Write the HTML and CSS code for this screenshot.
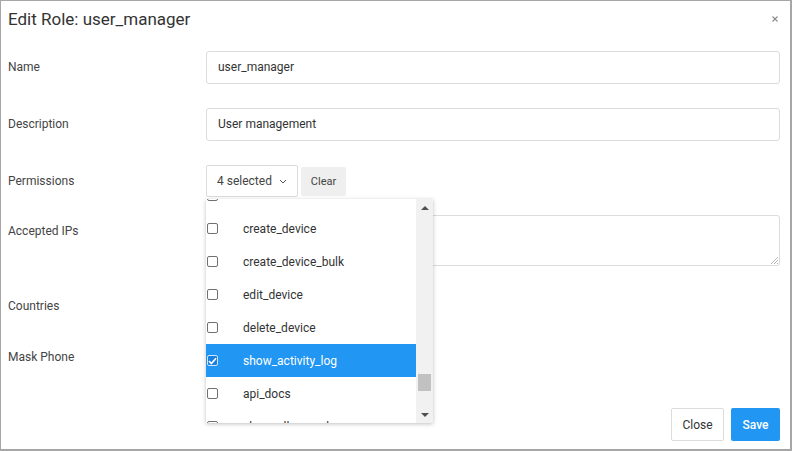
FILE: index.html
```html
<!DOCTYPE html>
<html>
<head>
<meta charset="utf-8">
<link rel="stylesheet" href="styles.css">
</head>
<body>
<div class="dialog">
  <div class="header">
    <h1 class="title">Edit Role: user_manager</h1>
    <button class="x" aria-label="close"><svg width="6" height="6" viewBox="0 0 6 6"><path d="M0.5 0.5L5.5 5.5M5.5 0.5L0.5 5.5" stroke="#8a8a8a" stroke-width="1.1"/></svg></button>
  </div>
  <div class="form">
    <div class="row">
      <label class="lbl">Name</label>
      <div class="field"><div class="input">user_manager</div></div>
    </div>
    <div class="row">
      <label class="lbl">Description</label>
      <div class="field"><div class="input">User management</div></div>
    </div>
    <div class="row row-perm">
      <label class="lbl">Permissions</label>
      <div class="field perm">
        <div class="perm-controls">
          <button class="sel-btn">4 selected <svg width="8" height="5" viewBox="0 0 8 5"><path d="M1 1L4 4L7 1" fill="none" stroke="#555" stroke-width="1"/></svg></button>
          <button class="clear-btn">Clear</button>
        </div>
        <div class="dropdown">
          <div class="list">
            <div class="item partial"><span class="cb"></span></div>
            <div class="item"><span class="cb"></span><span class="txt">create_device</span></div>
            <div class="item"><span class="cb"></span><span class="txt">create_device_bulk</span></div>
            <div class="item"><span class="cb"></span><span class="txt">edit_device</span></div>
            <div class="item"><span class="cb"></span><span class="txt">delete_device</span></div>
            <div class="item active"><span class="cb checked"><svg width="9" height="8" viewBox="0 0 9 8"><path d="M1 4.2L3.4 6.5L8 1.2" fill="none" stroke="#fff" stroke-width="1.6"/></svg></span><span class="txt">show_activity_log</span></div>
            <div class="item"><span class="cb"></span><span class="txt">api_docs</span></div>
            <div class="item"><span class="cb"></span><span class="txt">show_all_records</span></div>
          </div>
          <div class="sbar">
            <div class="arrow up"></div>
            <div class="track"><div class="thumb"></div></div>
            <div class="arrow down"></div>
          </div>
        </div>
      </div>
    </div>
    <div class="row">
      <label class="lbl">Accepted IPs</label>
      <div class="field"><div class="textarea"><svg class="grip" width="8" height="8" viewBox="0 0 8 8"><path d="M1 8L8 1M4 8L8 4M7 8L8 7" stroke="#777" stroke-width="0.8" stroke-dasharray="1 0.6"/></svg></div></div>
    </div>
    <div class="row row-short">
      <label class="lbl">Countries</label>
      <div class="field"></div>
    </div>
    <div class="row row-short">
      <label class="lbl lbl-low">Mask Phone</label>
      <div class="field"></div>
    </div>
  </div>
  <div class="footer">
    <button class="btn btn-close">Close</button>
    <button class="btn btn-save">Save</button>
  </div>
</div>
</body>
</html>
```
FILE: styles.css
```css
* { box-sizing: border-box; }
html, body { margin: 0; padding: 0; background: #fff; }
body { font-family: Roboto, "Noto Sans", "Liberation Sans", sans-serif; color: #333; }
button { font-family: inherit; }

.dialog {
  width: 792px;
  height: 451px;
  border: 1px solid #a6a6a6;
  border-right-width: 2px;
  border-bottom-width: 2px;
  display: flex;
  flex-direction: column;
  padding: 0 10px 0 7px;
  background: #fff;
}

.header {
  height: 50px;
  display: flex;
  align-items: flex-start;
  justify-content: space-between;
}
.title {
  margin: 0;
  padding-top: 8px;
  font-size: 17px;
  line-height: 20px;
  font-weight: 400;
  color: #333;
}
.x {
  border: 0;
  background: none;
  padding: 0;
  margin: 15px 2px 0 0;
  width: 6px;
  height: 6px;
  display: flex;
}

.form { display: flex; flex-direction: column; }
.row {
  display: grid;
  grid-template-columns: 198px 1fr;
  margin-bottom: 24px;
}
.row-perm { margin-bottom: 18px; }
.row-short { height: 26px; }
.lbl {
  font-size: 12px;
  line-height: 16px;
  padding-top: 8px;
  color: #444;
}
.lbl-low { padding-top: 9px; }
.field { min-width: 0; }
.input {
  height: 33px;
  border: 1px solid #dcdcdc;
  border-radius: 3px;
  padding: 0 11px;
  font-size: 12px;
  line-height: 31px;
  color: #333;
}
.textarea {
  height: 51px;
  border: 1px solid #dcdcdc;
  border-radius: 3px;
  position: relative;
}
.grip { position: absolute; right: 1px; bottom: 1px; }

.perm { position: relative; }
.perm-controls { display: flex; align-items: center; gap: 3px; height: 32px; }
.sel-btn {
  height: 32px;
  width: 92px;
  border: 1px solid #dcdcdc;
  border-radius: 2px;
  background: #fff;
  font-size: 12px;
  color: #444;
  padding: 0 0 0 10px;
  display: flex;
  align-items: center;
  gap: 7px;
}
.sel-btn svg { margin-top: 1px; }
.clear-btn {
  height: 29px;
  width: 45px;
  border: 0;
  border-radius: 2px;
  background: #efefef;
  font-size: 11px;
  color: #444;
  padding: 0;
}

.dropdown {
  position: absolute;
  top: 34px;
  left: 0;
  width: 227px;
  height: 224px;
  background: #fff;
  box-shadow: 0 1px 4px rgba(0,0,0,0.25);
  display: flex;
  z-index: 5;
}
.list { flex: 1; overflow: hidden; }
.item {
  height: 33px;
  display: flex;
  align-items: center;
  padding-left: 1px;
  font-size: 12px;
  color: #333;
}
.item.partial {
  height: 13px;
  align-items: flex-end;
  overflow: hidden;
}
.item.partial .cb { margin-bottom: 11px; }
.item.active { background: #2196f3; color: #fff; }
.cb {
  width: 11px;
  height: 11px;
  border: 1px solid #707070;
  border-radius: 2px;
  background: #fff;
  flex: none;
  display: flex;
  align-items: center;
  justify-content: center;
}
.cb.checked { background: #1a7fe0; border-color: #cfe5fb; }
.txt { margin-left: 25px; white-space: nowrap; }

.sbar {
  width: 17px;
  background: #f1f1f1;
  display: flex;
  flex-direction: column;
}
.arrow { height: 17px; display: flex; align-items: center; justify-content: center; }
.arrow::before {
  content: "";
  width: 0; height: 0;
  border-left: 4px solid transparent;
  border-right: 4px solid transparent;
}
.arrow.up::before { border-bottom: 4px solid #505050; }
.arrow.down::before { border-top: 4px solid #505050; }
.track { flex: 1; position: relative; }
.thumb {
  position: absolute;
  left: 2px;
  right: 2px;
  top: 158px;
  height: 17px;
  background: #c1c1c1;
}

.footer {
  margin-top: auto;
  display: flex;
  justify-content: flex-end;
  gap: 7px;
  padding-bottom: 8px;
}
.btn {
  height: 33px;
  border-radius: 2px;
  font-size: 12px;
  padding: 0;
}
.btn-close {
  width: 53px;
  background: #fff;
  border: 1px solid #dcdcdc;
  color: #333;
}
.btn-save {
  width: 49px;
  background: #2196f3;
  border: 0;
  color: #fff;
  font-weight: 500;
}
```
